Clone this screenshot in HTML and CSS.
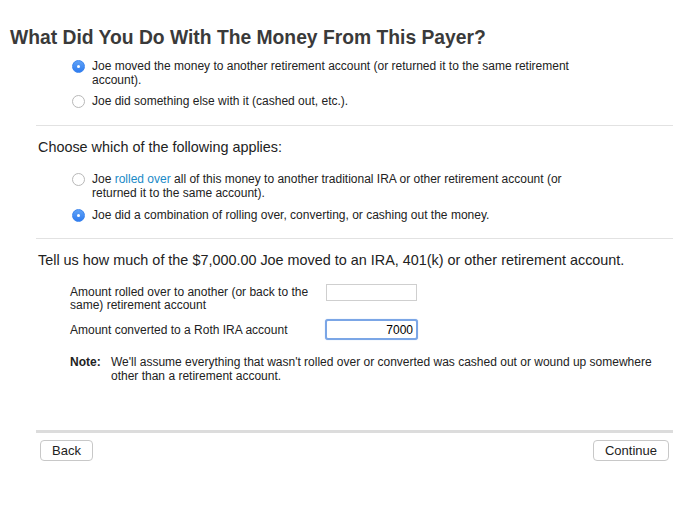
FILE: index.html
```html
<!DOCTYPE html>
<html lang="en">
<head>
    <meta charset="UTF-8">
    <title>What Did You Do With The Money</title>
    <link rel="stylesheet" href="styles.css">
</head>
<body>

    <h1 class="page-title">What Did You Do With The Money From This Payer?</h1>

    <div class="content">

        <!-- First question -->
        <div class="options first">
            <label class="option">
                <span class="radio checked"></span>
                <span>Joe moved the money to another retirement account (or returned it to the same retirement account).</span>
            </label>
            <label class="option">
                <span class="radio"></span>
                <span>Joe did something else with it (cashed out, etc.).</span>
            </label>
        </div>

        <hr class="divider">

        <!-- Which applies -->
        <h2 class="section-title">Choose which of the following applies:</h2>
        <div class="options">
            <label class="option">
                <span class="radio"></span>
                <span>Joe <a href="#" class="link">rolled over</a> all of this money to another traditional IRA or other retirement account (or returned it to the same account).</span>
            </label>
            <label class="option">
                <span class="radio checked"></span>
                <span>Joe did a combination of rolling over, converting, or cashing out the money.</span>
            </label>
        </div>

        <hr class="divider">

        <!-- Amounts -->
        <h2 class="section-title">Tell us how much of the $7,000.00 Joe moved to an IRA, 401(k) or other retirement account.</h2>
        <div class="amounts">
            <div class="amount-row">
                <div class="amount-label">Amount rolled over to another (or back to the same) retirement account</div>
                <input type="text" class="amount-input" value="">
            </div>
            <div class="amount-row centered">
                <div class="amount-label">Amount converted to a Roth IRA account</div>
                <input type="text" class="amount-input focused" value="7000">
            </div>
            <div class="note">
                <span class="note-label">Note:</span>
                <span>We'll assume everything that wasn't rolled over or converted was cashed out or wound up somewhere other than a retirement account.</span>
            </div>
        </div>

        <!-- Footer -->
        <div class="footer">
            <button class="btn">Back</button>
            <button class="btn">Continue</button>
        </div>
    </div>

</body>
</html>
```

FILE: styles.css
```css
/* General Styles */
body {
    font-family: 'Liberation Sans', Arial, sans-serif;
    margin: 0;
    padding: 0;
    background-color: #fff;
    color: #222;
    font-size: 12px;
}

.page-title {
    font-size: 19.3px;
    font-weight: bold;
    color: #3a3a3a;
    margin: 0;
    padding: 27px 0 0 10px;
    line-height: 22px;
}

.content {
    margin: 0 21px 0 36px;
}

/* Radio options */
.options {
    padding: 16px 0 16px 36px;
}

.options.first {
    padding-top: 10px;
    padding-bottom: 17px;
}

.option {
    display: flex;
    align-items: flex-start;
    gap: 7px;
    line-height: 14px;
    margin-bottom: 8px;
    max-width: 510px;
}

.options.first .option {
    margin-bottom: 7px;
}

.option:last-child,
.options.first .option:last-child {
    margin-bottom: 0;
}

.radio {
    flex: none;
    width: 11px;
    height: 11px;
    margin-top: 1px;
    border: 1px solid #b8b8b8;
    border-radius: 50%;
    background: #fff;
    position: relative;
}

.radio.checked {
    border-color: #3a84ee;
    background: linear-gradient(#5fa2f7, #2f7cf0);
}

.radio.checked::after {
    content: "";
    position: absolute;
    left: 4px;
    top: 4px;
    width: 3px;
    height: 3px;
    border-radius: 50%;
    background: #fff;
}

.link {
    color: #1a8ac7;
    text-decoration: none;
}

.divider {
    border: none;
    border-top: 1px solid #e2e2e2;
    margin: 0;
}

.section-title {
    font-size: 14.4px;
    font-weight: normal;
    color: #222;
    margin: 12px 0 0 2px;
    line-height: 18px;
}

/* Amounts */
.amounts {
    padding: 15px 0 0 34px;
}

.amount-row {
    display: flex;
    align-items: flex-start;
    margin-bottom: 7px;
}

.amount-row.centered {
    align-items: center;
}

.amount-label {
    width: 256px;
    line-height: 13px;
    margin-top: 2px;
}

.amount-row.centered .amount-label {
    margin-top: 0;
    padding-top: 2px;
}

.amount-input {
    width: 91px;
    height: 17px;
    box-sizing: border-box;
    border: 1px solid #cfcfcf;
    font-family: inherit;
    font-size: 12px;
    text-align: right;
    padding: 0 3px;
    margin: 0;
}

.amount-input.focused {
    width: 93px;
    height: 21px;
    border: 2px solid #7ba6e6;
    border-radius: 3px;
    margin-left: -1px;
    box-shadow: 0 0 1px #9bbcf0;
}

.note {
    display: flex;
    gap: 10px;
    line-height: 14px;
    margin-top: 15px;
    padding-right: 10px;
}

.note-label {
    font-weight: bold;
    flex: none;
    width: 31px;
}

/* Footer */
.footer {
    border-top: 3px solid #dcdcdc;
    margin-top: 47px;
    padding: 7px 4px 0 4px;
    display: flex;
    justify-content: space-between;
}

.btn {
    font-family: inherit;
    font-size: 13px;
    height: 21px;
    padding: 0 11px;
    background: #fff;
    border: 1px solid #c8c8c8;
    border-radius: 4px;
    color: #222;
}
```
